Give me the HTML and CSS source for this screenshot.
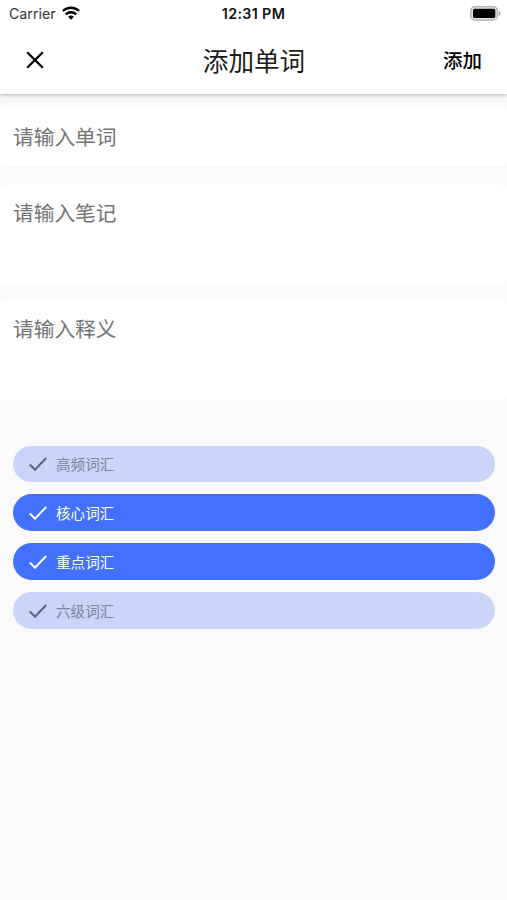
FILE: index.html
```html
<!DOCTYPE html>
<html lang="zh-CN">
<head>
    <meta charset="UTF-8">
    <meta name="viewport" content="width=device-width, initial-scale=1.0">
    <title>添加单词</title>
    <link rel="stylesheet" href="styles.css">
</head>
<body>
    <header class="header">
        <div class="status-bar">
            <div class="carrier">
                <span>Carrier</span>
                <svg class="wifi" viewBox="0 0 18 14">
                    <path d="M0.9 5a11.8 11.8 0 0 1 16.2 0M3.8 8.3a7.5 7.5 0 0 1 10.4 0" fill="none" stroke="#000" stroke-width="2.4"/>
                    <path d="M9 13.7L6 10.8a4.4 4.4 0 0 1 6 0z"/>
                </svg>
            </div>
            <div class="time">12:31 PM</div>
            <svg class="battery" viewBox="0 0 31 15">
                <rect x="0.8" y="0.8" width="26.6" height="13.2" rx="4" fill="#e8e8e8" stroke="#b5b5b5" stroke-width="1.5"/>
                <rect x="3" y="2.8" width="22.3" height="9.2" rx="1.5"/>
                <path d="M28.8 5a2.6 2.6 0 0 1 0 5z" fill="#aaa"/>
            </svg>
        </div>
        <div class="nav">
            <svg class="close" viewBox="0 0 18 18">
                <path d="M1.2 1.2l15.6 15.6M16.8 1.2L1.2 16.8" stroke="#000" stroke-width="2.3"/>
            </svg>
            <h1 class="title">添加单词</h1>
            <div class="submit">添加</div>
        </div>
    </header>

    <main class="form">
        <div class="field">请输入单词</div>
        <div class="field field-note">请输入笔记</div>
        <div class="field field-meaning">请输入释义</div>

        <div class="tags">
            <div class="tag">
                <svg class="check" viewBox="0 0 18 14"><path d="M0.8 7.5l5.2 5.2L17.2 1"/></svg>
                <span>高频词汇</span>
            </div>
            <div class="tag active">
                <svg class="check" viewBox="0 0 18 14"><path d="M0.8 7.5l5.2 5.2L17.2 1"/></svg>
                <span>核心词汇</span>
            </div>
            <div class="tag active">
                <svg class="check" viewBox="0 0 18 14"><path d="M0.8 7.5l5.2 5.2L17.2 1"/></svg>
                <span>重点词汇</span>
            </div>
            <div class="tag">
                <svg class="check" viewBox="0 0 18 14"><path d="M0.8 7.5l5.2 5.2L17.2 1"/></svg>
                <span>六级词汇</span>
            </div>
        </div>
    </main>
</body>
</html>
```

FILE: styles.css
```css
* {
    box-sizing: border-box;
}
body {
    margin: 0;
    min-height: 100vh;
    background-color: #fafafa;
    font-family: Inter, "Noto Sans CJK SC", sans-serif;
}

.header {
    position: relative;
    height: 94px;
    background-color: #fff;
    box-shadow: 0 1px 4px rgba(0, 0, 0, 0.3);
}
.status-bar {
    display: grid;
    grid-template-columns: 1fr auto 1fr;
    align-items: center;
    height: 27px;
    padding: 0 6px 0 9px;
}
.carrier {
    display: flex;
    align-items: center;
    gap: 6px;
    font-size: 14.2px;
    color: #333;
}
.wifi {
    width: 18px;
    height: 14px;
    margin-top: -2px;
}
.time {
    font-size: 14.3px;
    font-weight: 600;
    letter-spacing: 0.35px;
    margin-right: 3px;
    color: #111;
}
.battery {
    width: 31px;
    height: 15px;
    justify-self: end;
}

.nav {
    display: grid;
    grid-template-columns: 1fr auto 1fr;
    align-items: center;
    height: 66px;
    padding: 0 25px 0 26px;
}
.close {
    width: 18px;
    height: 18px;
}
.title {
    margin: 0;
    padding-top: 3px;
    font-size: 25.6px;
    font-weight: 400;
    line-height: 36px;
    color: #1c1c1c;
}
.submit {
    justify-self: end;
    padding-top: 2px;
    font-size: 19.5px;
    font-weight: 500;
    line-height: 28px;
    color: #000;
}

.form {
    padding-top: 13px;
}
.field {
    height: 59px;
    padding: 16px 13px 0;
    border-radius: 6px;
    background-color: #fff;
    font-size: 20.7px;
    line-height: 30px;
    color: #737373;
}
.field-note {
    height: 99px;
    margin-top: 19px;
    padding-top: 14px;
}
.field-meaning {
    height: 99px;
    margin-top: 17px;
    padding-top: 14px;
}

.tags {
    display: flex;
    flex-direction: column;
    gap: 12.3px;
    padding: 45.6px 12px 0 13px;
}
.tag {
    display: flex;
    align-items: center;
    gap: 9px;
    height: 36.6px;
    padding-left: 16px;
    border-radius: 19px;
    background-color: #cbd5f9;
    font-size: 14.6px;
    color: #7c84a0;
}
.tag.active {
    background-color: #4270ff;
    color: #fff;
}
.check {
    width: 18px;
    height: 14px;
    fill: none;
    stroke: #596078;
    stroke-width: 2;
}
.active .check {
    stroke: #fff;
}
```
